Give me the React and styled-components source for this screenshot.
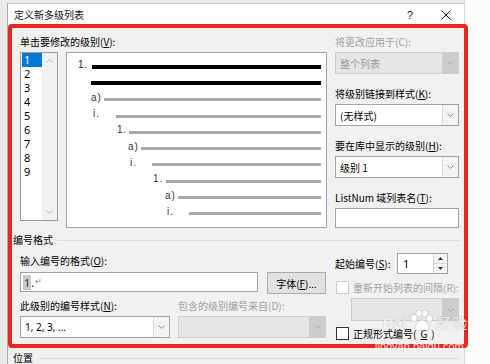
import React from 'react';
import styled, { createGlobalStyle } from 'styled-components';

const Global = createGlobalStyle`
  html, body { margin: 0; padding: 0; height: 100%; overflow: hidden; }
  body {
    font-family: "Noto Sans CJK SC", "Liberation Sans", sans-serif;
    font-size: 10px;
    color: #000;
    background: #fff;
  }
  #root { height: 100%; }
  * { box-sizing: border-box; }
`;

const Page = styled.div`
  position: relative;
  display: flex;
  height: 364px;
  background: #fff;
`;

const Screen = styled.div`
  width: 464px;
  padding: 3px 0 0 7px;
  background: #e9e9e9;
  display: flex;
  flex-direction: column;
`;

const RightFill = styled.div`
  flex: 1;
  background: #fbfbfb;
  border-left: 1px solid #d6d6d6;
`;

const Dialog = styled.div`
  flex: 1;
  display: flex;
  flex-direction: column;
  background: #f0f0f0;
  border-left: 1px solid #a9a9a9;
  border-top: 1px solid #c4c4c4;
`;

const TitleBar = styled.div`
  height: 21px;
  background: #fff;
  display: flex;
  align-items: center;
  padding-left: 6px;
  font-size: 10px;
  color: #111;
`;

const TitleText = styled.span`
  flex: 1;
  line-height: 14px;
`;

const TitleButton = styled.div`
  width: 36px;
  height: 21px;
  display: flex;
  align-items: center;
  justify-content: center;
  font-family: "Liberation Sans", sans-serif;
  font-size: 11px;
  color: #222;
`;

const Body = styled.div`
  padding: 10px 4px 0 5px;
  display: flex;
  flex-direction: column;
`;

const TopSection = styled.div`
  display: flex;
  gap: 8px;
  padding-left: 7px;
`;

const LeftCol = styled.div`
  width: 307px;
  display: flex;
  flex-direction: column;
`;

const Label = styled.div`
  height: 14px;
  line-height: 14px;
  white-space: nowrap;
  color: ${p => (p.$disabled ? '#a2a2a2' : '#000')};
`;

const Key = styled.span`
  text-decoration: underline;
  text-underline-offset: 1px;
`;

const LevelRow = styled.div`
  display: flex;
  gap: 8px;
  margin-top: 3px;
  align-items: flex-start;
`;

const ListBox = styled.div`
  width: 38px;
  height: 169px;
  border: 1px solid #9c9c9c;
  background: #fff;
  display: flex;
`;

const ListItems = styled.div`
  flex: 1;
  padding: 0 0 0 1px;
`;

const ListItem = styled.div`
  height: 14px;
  line-height: 14px;
  padding-left: 2px;
  font-family: "Noto Sans", "Liberation Sans", sans-serif;
  font-size: 11px;
  background: ${p => (p.$selected ? '#0078d7' : 'transparent')};
  color: ${p => (p.$selected ? '#fff' : '#000')};
`;

const ScrollBar = styled.div`
  width: 15px;
  background: #f0f0f0;
  display: flex;
  flex-direction: column;
  justify-content: space-between;
  align-items: center;
  padding: 6px 0 6px;
`;

const Preview = styled.div`
  width: 261px;
  height: 176px;
  border: 1px solid #a5a5a5;
  background: #fff;
  padding-top: 6px;
  display: flex;
  flex-direction: column;
`;

const PreviewRow = styled.div`
  height: 16.3px;
  display: flex;
  align-items: center;
  padding-right: 5px;
`;

const PreviewLabel = styled.span`
  flex: none;
  font-family: "Liberation Sans", sans-serif;
  font-size: 10px;
  line-height: 11px;
  letter-spacing: 1px;
  color: ${p => (p.$dark ? '#222' : '#333')};
  margin-bottom: 5px;
`;

const Bar = styled.div`
  flex: 1;
  height: ${p => (p.$dark ? '4px' : '3px')};
  background: ${p => (p.$dark ? '#000' : '#a8a8a8')};
`;

const RightCol = styled.div`
  width: 124px;
  display: flex;
  flex-direction: column;
  gap: 13px;
`;

const Field = styled.div`
  display: flex;
  flex-direction: column;
  gap: ${p => p.$gap ?? 3}px;
  width: ${p => (p.$w ? `${p.$w}px` : 'auto')};
`;

const ComboBox = styled.div`
  height: ${p => p.$h ?? 22}px;
  width: ${p => (p.$w ? `${p.$w}px` : '100%')};
  margin-left: ${p => p.$ml ?? 0}px;
  margin-top: ${p => p.$mt ?? 0}px;
  border: 1px solid ${p => (p.$disabled ? '#cdcdcd' : '#a3a3a3')};
  background: ${p => (p.$disabled ? '#e5e5e5' : '#fff')};
  display: flex;
  align-items: stretch;
`;

const ComboText = styled.div`
  flex: 1;
  display: flex;
  align-items: center;
  padding-left: 4px;
  white-space: nowrap;
  color: ${p => (p.$disabled ? '#9a9a9a' : '#000')};
  font-family: ${p => (p.$latin ? '"Noto Sans", "Liberation Sans", sans-serif' : 'inherit')};
`;

const ComboButton = styled.div`
  width: 16px;
  display: flex;
  align-items: center;
  justify-content: center;
  background: ${p => (p.$disabled ? '#cccccc' : '#f3f3f3')};
  border-left: 1px solid ${p => (p.$disabled ? '#cccccc' : '#d9d9d9')};
`;

const TextInput = styled.div`
  height: ${p => p.$h ?? 20}px;
  width: ${p => (p.$w ? `${p.$w}px` : '100%')};
  border: 1px solid #a3a3a3;
  background: #fff;
  display: flex;
  align-items: center;
  padding-left: 2px;
  font-family: "Noto Sans", "Liberation Sans", sans-serif;
  font-size: 11px;
`;

const Highlight = styled.span`
  background: #c9c9c9;
  color: #333;
  padding: 0 1px;
`;

const ReturnMark = styled.span`
  font-size: 8px;
  color: #888;
  margin-left: 1px;
  position: relative;
  top: -2px;
`;

const GroupHeader = styled.div`
  display: flex;
  align-items: center;
  gap: 4px;
  margin-top: ${p => p.$mt ?? 5}px;
  height: 14px;
  line-height: 14px;
  padding-right: 1px;
  &::after {
    content: '';
    flex: 1;
    height: 1px;
    background: #dcdcdc;
  }
`;

const LowerSection = styled.div`
  display: flex;
  gap: 9px;
  padding-left: 7px;
  margin-top: 6px;
`;

const LowerLeft = styled.div`
  width: 306px;
  padding-top: 1px;
  display: flex;
  flex-direction: column;
`;

const InputRow = styled.div`
  display: flex;
  gap: 9px;
  margin-top: 4px;
  align-items: flex-start;
`;

const Button = styled.div`
  width: 59px;
  height: 22px;
  border: 1px solid #adadad;
  background: #e1e1e1;
  display: flex;
  align-items: center;
  justify-content: center;
  white-space: nowrap;
`;

const StyleRow = styled.div`
  display: flex;
  gap: 8px;
  margin-top: 5px;
`;

const LowerRight = styled.div`
  width: 124px;
  display: flex;
  flex-direction: column;
`;

const SpinRow = styled.div`
  display: grid;
  grid-template-columns: 62px 51px;
  align-items: center;
`;

const SpinBox = styled.div`
  height: 21px;
  border: 1px solid #a3a3a3;
  background: #fff;
  display: flex;
`;

const SpinValue = styled.div`
  flex: 1;
  display: flex;
  align-items: center;
  padding-left: 5px;
  font-family: "Noto Sans", "Liberation Sans", sans-serif;
  font-size: 11px;
`;

const SpinButtons = styled.div`
  width: 14px;
  display: flex;
  flex-direction: column;
  border-left: 1px solid #d4d4d4;
`;

const SpinHalf = styled.div`
  flex: 1;
  display: flex;
  align-items: center;
  justify-content: center;
  background: #f4f4f4;
  & + & { border-top: 1px solid #d4d4d4; }
`;

const CheckRow = styled.div`
  display: flex;
  align-items: center;
  gap: 4px;
  height: 13px;
  margin-top: ${p => p.$mt ?? 0}px;
  padding-left: 1px;
  white-space: nowrap;
  color: ${p => (p.$disabled ? '#a2a2a2' : '#000')};
`;

const CheckBox = styled.div`
  width: 13px;
  height: 13px;
  flex: none;
  border: 1px solid ${p => (p.$disabled ? '#cccccc' : '#333')};
  background: #fff;
`;

const RedFrame = styled.div`
  position: absolute;
  left: 8px;
  top: 24px;
  width: 460px;
  height: 324px;
  border: 4px solid #e9261f;
  border-radius: 4px;
  pointer-events: none;
`;

const Watermark = styled.div`
  position: absolute;
  left: 383px;
  top: 310px;
  display: flex;
  align-items: flex-end;
  gap: 2px;
  color: rgba(255, 255, 255, 0.9);
  text-shadow: 0 0 1px rgba(0, 0, 0, 0.35);
  pointer-events: none;
`;

const WmLatin = styled.span`
  font-family: "Liberation Sans", sans-serif;
  font-weight: bold;
  font-size: 15px;
  line-height: 18px;
`;

const WmCjk = styled.span`
  font-size: 15px;
  line-height: 18px;
  letter-spacing: 1px;
`;

const WmUrl = styled.div`
  position: absolute;
  left: 375px;
  top: 340px;
  font-family: "Liberation Sans", sans-serif;
  font-size: 11px;
  line-height: 12px;
  color: rgba(255, 255, 255, 0.85);
  pointer-events: none;
`;

const Chevron = ({ up = false, color = '#8a8a8a' }) => (
  <svg width="7" height="4" viewBox="0 0 7 4">
    <path
      d={up ? 'M0.5 3.5 L3.5 0.5 L6.5 3.5' : 'M0.5 0.5 L3.5 3.5 L6.5 0.5'}
      fill="none"
      stroke={color}
      strokeWidth="1"
    />
  </svg>
);

const Tri = ({ up }) => (
  <svg width="5" height="3" viewBox="0 0 5 3">
    <path d={up ? 'M0 3 L2.5 0 L5 3 Z' : 'M0 0 L2.5 3 L5 0 Z'} fill="#333" />
  </svg>
);

const Combo = ({ text, disabled, latin, ...rest }) => (
  <ComboBox $disabled={disabled} {...rest}>
    <ComboText $disabled={disabled} $latin={latin}>{text}</ComboText>
    <ComboButton $disabled={disabled}>
      <Chevron color={disabled ? '#a8a8a8' : '#8a8a8a'} />
    </ComboButton>
  </ComboBox>
);

const previewRows = [
  { indent: 11, label: '1.', w: 14, dark: true },
  { indent: 24, label: '', w: 0, dark: true },
  { indent: 24, label: 'a)', w: 13 },
  { indent: 26, label: 'i.', w: 23 },
  { indent: 50, label: '1.', w: 12 },
  { indent: 61, label: 'a)', w: 13 },
  { indent: 63, label: 'i.', w: 22 },
  { indent: 86, label: '1.', w: 13 },
  { indent: 98, label: 'a)', w: 13 },
  { indent: 100, label: 'i.', w: 22 },
];

const Paw = () => (
  <svg width="26" height="22" viewBox="0 0 26 22">
    <g fill="rgba(255,255,255,0.9)" stroke="rgba(0,0,0,0.2)" strokeWidth="0.6">
      <ellipse cx="6" cy="8" rx="3" ry="3.6" />
      <ellipse cx="11" cy="3.6" rx="3" ry="3.4" />
      <ellipse cx="17" cy="3.6" rx="3" ry="3.4" />
      <ellipse cx="21.5" cy="8.5" rx="3" ry="3.6" />
      <path d="M7 18 C8 12 12 10 14 10 C17 10 20 13 21 18 C21 21 17 21 14 20 C11 21 7 21 7 18 Z" />
    </g>
  </svg>
);

export default function App() {
  return (
    <>
      <Global />
      <Page>
        <Screen>
          <Dialog>
            <TitleBar>
              <TitleText>定义新多级列表</TitleText>
              <TitleButton>?</TitleButton>
              <TitleButton>
                <svg width="10" height="10" viewBox="0 0 10 10">
                  <path d="M0.5 0.5 L9.5 9.5 M9.5 0.5 L0.5 9.5" stroke="#222" strokeWidth="1" />
                </svg>
              </TitleButton>
            </TitleBar>
            <Body>
              <TopSection>
                <LeftCol>
                  <Label>单击要修改的级别(<Key>V</Key>):</Label>
                  <LevelRow>
                    <ListBox>
                      <ListItems>
                        {[1, 2, 3, 4, 5, 6, 7, 8, 9].map(n => (
                          <ListItem key={n} $selected={n === 1}>{n}</ListItem>
                        ))}
                      </ListItems>
                      <ScrollBar>
                        <Chevron up color="#b5b5b5" />
                        <Chevron color="#b5b5b5" />
                      </ScrollBar>
                    </ListBox>
                    <Preview>
                      {previewRows.map((r, i) => (
                        <PreviewRow key={i} style={{ paddingLeft: r.indent }}>
                          {r.w > 0 && (
                            <PreviewLabel $dark={r.dark} style={{ width: r.w }}>{r.label}</PreviewLabel>
                          )}
                          <Bar $dark={r.dark} />
                        </PreviewRow>
                      ))}
                    </Preview>
                  </LevelRow>
                </LeftCol>
                <RightCol>
                  <Field>
                    <Label $disabled>将更改应用于(C):</Label>
                    <Combo text="整个列表" disabled />
                  </Field>
                  <Field>
                    <Label>将级别链接到样式(<Key>K</Key>):</Label>
                    <Combo text="(无样式)" />
                  </Field>
                  <Field>
                    <Label>要在库中显示的级别(<Key>H</Key>):</Label>
                    <Combo text="级别 1" />
                  </Field>
                  <Field>
                    <Label>ListNum 域列表名(<Key>T</Key>):</Label>
                    <TextInput />
                  </Field>
                </RightCol>
              </TopSection>

              <GroupHeader>编号格式</GroupHeader>

              <LowerSection>
                <LowerLeft>
                  <Label>输入编号的格式(<Key>O</Key>):</Label>
                  <InputRow>
                    <TextInput $w={238}>
                      <Highlight>1</Highlight>.<ReturnMark>↵</ReturnMark>
                    </TextInput>
                    <Button>字体(<Key>F</Key>)...</Button>
                  </InputRow>
                  <StyleRow>
                    <Field $w={150}>
                      <Label>此级别的编号样式(<Key>N</Key>):</Label>
                      <Combo text="1, 2, 3, ..." latin />
                    </Field>
                    <Field $w={148}>
                      <Label $disabled>包含的级别编号来自(D):</Label>
                      <Combo text="" disabled />
                    </Field>
                  </StyleRow>
                </LowerLeft>
                <LowerRight>
                  <SpinRow>
                    <Label>起始编号(<Key>S</Key>):</Label>
                    <SpinBox>
                      <SpinValue>1</SpinValue>
                      <SpinButtons>
                        <SpinHalf><Tri up /></SpinHalf>
                        <SpinHalf><Tri /></SpinHalf>
                      </SpinButtons>
                    </SpinBox>
                  </SpinRow>
                  <CheckRow $mt={7} $disabled>
                    <CheckBox $disabled />
                    重新开始列表的间隔(R):
                  </CheckRow>
                  <Combo text="" disabled $ml={16} $w={108} $h={23} $mt={4} />
                  <CheckRow $mt={6}>
                    <CheckBox />
                    正规形式编号(<Key>G</Key>)
                  </CheckRow>
                </LowerRight>
              </LowerSection>

              <GroupHeader $mt={11}>位置</GroupHeader>
            </Body>
          </Dialog>
        </Screen>
        <RightFill />
        <RedFrame />
        <Watermark>
          <WmLatin>Bai</WmLatin>
          <Paw />
          <WmCjk>经验</WmCjk>
        </Watermark>
        <WmUrl>jingyan.baidu.com</WmUrl>
      </Page>
    </>
  );
}
